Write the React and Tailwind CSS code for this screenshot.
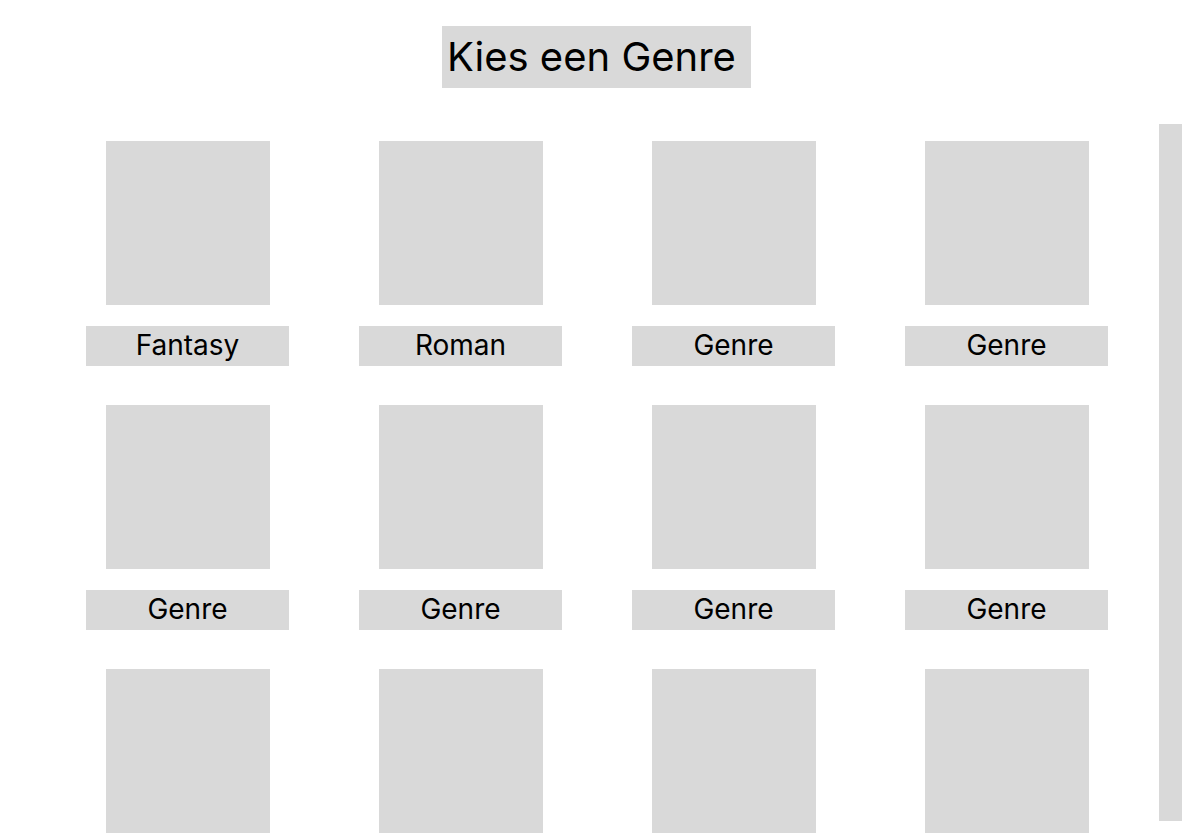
const genres = [
  'Fantasy', 'Roman', 'Genre', 'Genre',
  'Genre', 'Genre', 'Genre', 'Genre',
  'Genre', 'Genre', 'Genre', 'Genre',
]

export default function App() {
  return (
    <div
      className="relative h-[834px] overflow-hidden bg-white text-black"
      style={{ fontFamily: 'Inter, "Noto Sans", sans-serif' }}
    >
      {/* Title */}
      <div className="flex justify-center pt-[26px] pr-[1px]">
        <h1 className="w-[309px] h-[62px] bg-[#d9d9d9] pl-[5px] text-[40px] leading-[62px] font-normal">
          Kies een Genre
        </h1>
      </div>

      {/* Genre grid */}
      <div className="mt-[53px] flex justify-center">
        <div className="grid grid-cols-[repeat(4,203px)] gap-x-[70px] gap-y-[39px]">
          {genres.map((g, i) => (
            <div key={i} className="flex flex-col items-center gap-[21px]">
              <div className="w-[164px] h-[164px] bg-[#d9d9d9]" />
              <div className="w-[203px] h-[40px] bg-[#d9d9d9] text-center text-[28px] leading-[38px]">
                {g}
              </div>
            </div>
          ))}
        </div>
      </div>

      {/* Scroll track */}
      <div className="absolute top-[124px] right-[12px] w-[23px] h-[697px] bg-[#d9d9d9]" />
    </div>
  )
}
